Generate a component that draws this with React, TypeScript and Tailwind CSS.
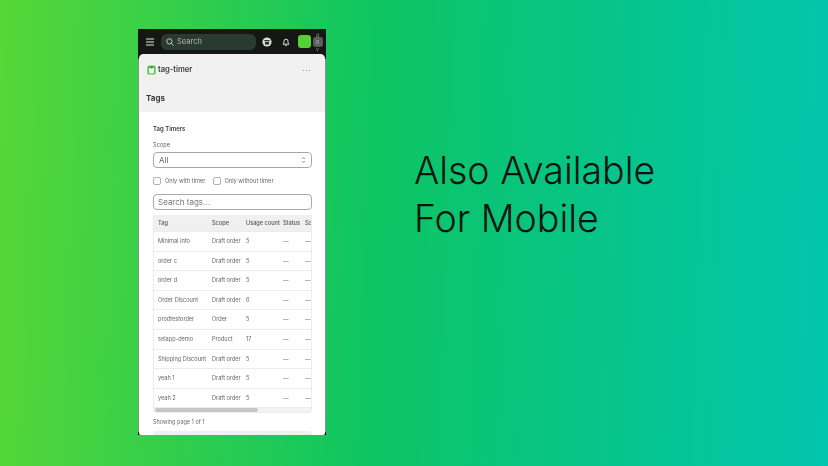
import React from "react";

const rows: [string, string, string][] = [
  ["Minimal info", "Draft order", "5"],
  ["order c", "Draft order", "5"],
  ["order d", "Draft order", "5"],
  ["Order Discount", "Draft order", "6"],
  ["prodtestorder", "Order", "5"],
  ["selapp-demo", "Product", "17"],
  ["Shipping Discount", "Draft order", "5"],
  ["yeah 1", "Draft order", "5"],
  ["yeah 2", "Draft order", "5"],
];

function Row({ cells, head }: { cells: string[]; head?: boolean }) {
  const widths = ["w-[54px]", "w-[34px]", "w-[37px]", "w-[22px]", "w-[20px]"];
  return (
    <div className={`flex items-center w-[190px] shrink-0 pl-[4px] ${head ? "h-[16px] bg-[#f0f0f0] text-[#555] font-medium" : "h-[19.6px] border-t border-[#ececec] text-[#666]"}`}>
      {cells.map((c, i) => (
        <div key={i} className={`${widths[i]} shrink-0 whitespace-nowrap`}>{c}</div>
      ))}
    </div>
  );
}

export default function App() {
  return (
    <div className="w-[828px] h-[466px] overflow-hidden flex items-start bg-[linear-gradient(92deg,#57d737_0%,#0dc561_45%,#08c47f_65%,#02c6ae_100%)] font-['Inter',sans-serif]">
      <div className="ml-[138px] mt-[29px] w-[188px] h-[406px] bg-[linear-gradient(#141714_30px,#8b8f8c_30px,#8b8f8c_403px,#141714_403px)] flex flex-col overflow-hidden shrink-0 blur-[0.4px]">
        <div className="h-[25px] bg-[#141714] flex items-center shrink-0 pl-[7px]">
          <svg width="10" height="10" viewBox="0 0 10 10" fill="none" stroke="#e8e8e8" strokeWidth="1.1">
            <path d="M1 2h8M1 5h8M1 8h8" />
          </svg>
          <div className="ml-[6px] w-[95px] h-[16px] rounded-[6px] bg-[#2a3a33] flex items-center pl-[5px] gap-[3px]">
            <svg width="8" height="8" viewBox="0 0 8 8" fill="none" stroke="#d8d8d8" strokeWidth="0.9">
              <circle cx="3.4" cy="3.4" r="2.6" />
              <path d="M5.4 5.4L7.6 7.6" />
            </svg>
            <span className="text-[7.5px] text-[#b4b8b6]">Search</span>
          </div>
          <svg className="ml-[6px]" width="10" height="10" viewBox="0 0 10 10">
            <circle cx="5" cy="5" r="4.6" fill="#dcdcdc" />
            <path d="M2.4 3h5.2v1.2H2.4zM3 5h4v2.4H3z" fill="#26302b" />
          </svg>
          <svg className="ml-[9px]" width="10" height="10" viewBox="0 0 10 10" fill="none" stroke="#e4e4e4" strokeWidth="1">
            <path d="M2 7.2c.9-.8 1-1.6 1-3a2 2 0 0 1 4 0c0 1.4.1 2.2 1 3z" />
            <path d="M4.2 8.6h1.6" />
          </svg>
          <div className="ml-[7px] w-[13px] h-[13px] rounded-[3px] bg-[#55d136]" />
          <div className="ml-[1px] flex flex-col items-center w-[11px] text-[5px] leading-[4px] text-[#9a9a9a]">
            <span>d</span>
            <div className="w-[10px] h-[10px] rounded-[3px] bg-[#5b5f5c] flex items-center justify-center text-[6px] text-[#b9b9b9]">o</div>
            <span>v</span>
          </div>
        </div>
        <div className="mx-px flex-1 min-h-0 bg-white rounded-t-[5px] rounded-b-[2px] overflow-hidden flex flex-col">
          <div className="h-[58px] bg-[#f1f1f1] shrink-0 flex flex-col px-[7px]">
            <div className="flex items-center h-[32px] pl-[1px]">
              <svg width="9" height="10" viewBox="0 0 9 10">
                <rect x="0.3" y="0.5" width="8.4" height="9" rx="1.6" fill="#4fcf4a" />
                <rect x="2" y="3" width="5" height="5.2" rx="0.6" fill="#f4f4f4" />
                <rect x="3.4" y="1.5" width="2.2" height="1.8" fill="#5a6a5a" />
              </svg>
              <span className="ml-[2px] text-[7.6px] font-semibold text-[#3c3c3c]">tag-timer</span>
              <span className="ml-auto mr-[7px] text-[8px] leading-none tracking-[0.5px] text-[#666]">···</span>
            </div>
            <div className="text-[8px] font-bold text-[#3a3a3a] mt-[6px]">Tags</div>
          </div>
          <div className="flex-1 min-h-0 pl-[14px] pr-[13px] pt-[12px] flex flex-col overflow-hidden text-[#666]">
            <div className="text-[6px] leading-[10px] font-semibold text-[#3c3c3c]">Tag Timers</div>
            <div className="text-[5.7px] leading-[8px] mt-[7px]">Scope</div>
            <div className="mt-[3px] h-[16px] rounded-[4px] border border-[#a8a8a8] flex items-center justify-between px-[5px] text-[8px] shrink-0">
              <span>All</span>
              <svg width="5" height="8" viewBox="0 0 5 8" fill="none" stroke="#777" strokeWidth="0.7">
                <path d="M1 3L2.5 1.4L4 3M1 5L2.5 6.6L4 5" />
              </svg>
            </div>
            <div className="flex items-center mt-[9px] h-[8px] text-[5.7px] shrink-0">
              <div className="w-[8px] h-[8px] rounded-[2px] border border-[#b0b0b0]" />
              <span className="ml-[4px]">Only with timer</span>
              <div className="ml-[8px] w-[8px] h-[8px] rounded-[2px] border border-[#b0b0b0]" />
              <span className="ml-[3px]">Only without timer</span>
            </div>
            <div className="mt-[9px] h-[16px] rounded-[4px] border border-[#a8a8a8] flex items-center px-[4px] text-[8px] text-[#777] shrink-0">
              Search tags...
            </div>
            <div className="mt-[5px] w-[159px] border border-[#ececec] border-t-0 rounded-b-[3px] overflow-hidden text-[5.6px] shrink-0 flex flex-col">
              <Row head cells={["Tag", "Scope", "Usage count", "Status", "Sc"]} />
              {rows.map((r) => (
                <Row key={r[0]} cells={[r[0], r[1], r[2], "—", "—"]} />
              ))}
              <div className="h-[5px] bg-[#f2f2f2] border-t border-[#ececec] flex items-center pl-px">
                <div className="w-[103px] h-[4px] rounded-full bg-[#c6c6c6]" />
              </div>
            </div>
            <div className="text-[5.5px] leading-[8px] mt-[5px] text-[#6a6a6a]">Showing page 1 of 1</div>
            <div className="mt-[5px] h-[8px] rounded-t-[3px] bg-[#f0f0f0] shrink-0" />
          </div>
        </div>
      </div>
      <div className="ml-[88px] mt-[147px] text-[37.5px] leading-[47.5px] font-light text-[#0a1410]">
        <div>Also Available</div>
        <div>For Mobile</div>
      </div>
    </div>
  );
}
